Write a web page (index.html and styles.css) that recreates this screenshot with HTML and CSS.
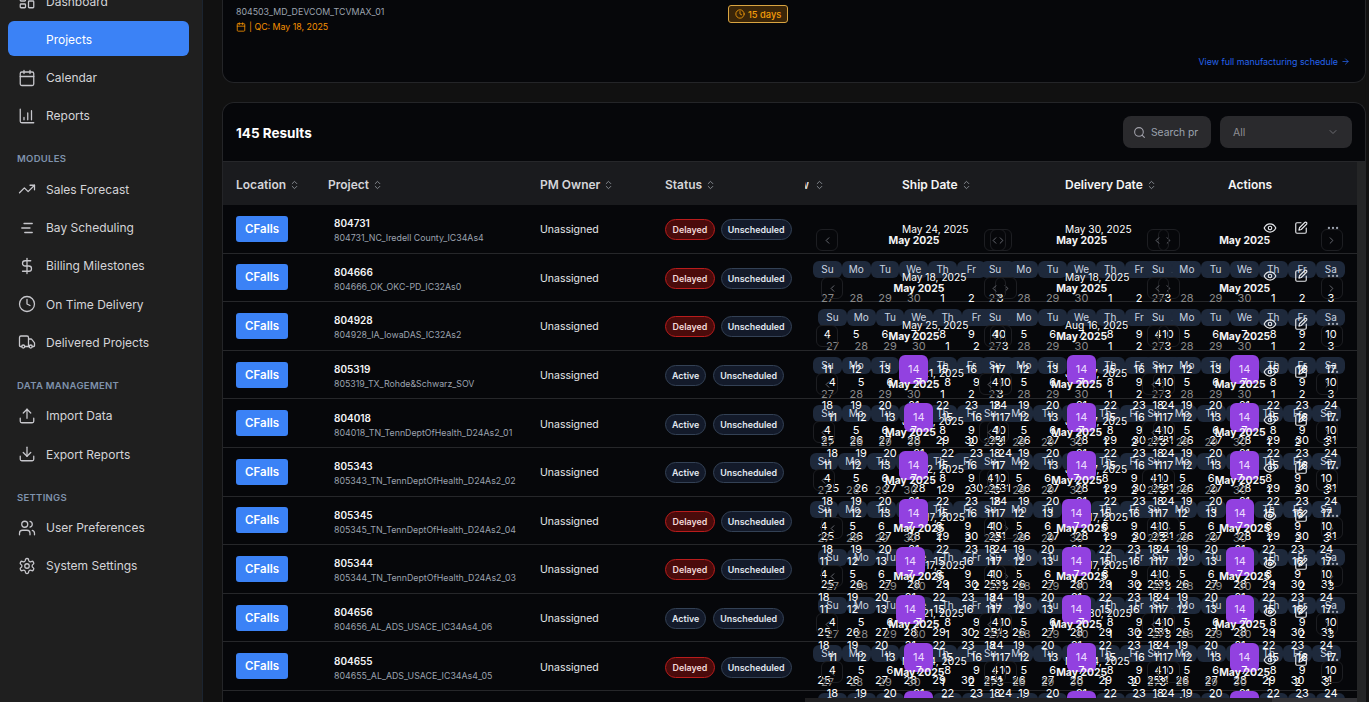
FILE: index.html
```html
<!DOCTYPE html>
<html lang="en">
<head>
<meta charset="utf-8">
<title>Projects</title>
<link rel="stylesheet" href="styles.css">
</head>
<body>
<svg class="sprite" aria-hidden="true">
  <defs>
    <symbol id="i-dash" viewBox="0 0 24 24"><rect x="3" y="3" width="7" height="9" rx="1"/><rect x="14" y="3" width="7" height="5" rx="1"/><rect x="14" y="12" width="7" height="9" rx="1"/><rect x="3" y="16" width="7" height="5" rx="1"/></symbol>
    <symbol id="i-cal" viewBox="0 0 24 24"><path d="M8 2v4M16 2v4"/><rect x="3" y="4" width="18" height="18" rx="2"/><path d="M3 10h18"/></symbol>
    <symbol id="i-chart" viewBox="0 0 24 24"><path d="M3 3v16a2 2 0 0 0 2 2h16"/><path d="M8 17v-3M13 17V8M18 17V5"/></symbol>
    <symbol id="i-trend" viewBox="0 0 24 24"><path d="M22 7l-8.500 8.500-5-5L2 17"/><path d="M16 7h6v6"/></symbol>
    <symbol id="i-list" viewBox="0 0 24 24"><path d="M8 6h11M5 12h11M9 18h10"/></symbol>
    <symbol id="i-dollar" viewBox="0 0 24 24"><path d="M12 2v20"/><path d="M17 5H9.500a3.500 3.500 0 0 0 0 7h5a3.500 3.500 0 0 1 0 7H6"/></symbol>
    <symbol id="i-clock" viewBox="0 0 24 24"><circle cx="12" cy="12" r="10"/><path d="M12 6v6l4 2"/></symbol>
    <symbol id="i-truck" viewBox="0 0 24 24"><path d="M14 18V6a2 2 0 0 0-2-2H4a2 2 0 0 0-2 2v11a1 1 0 0 0 1 1h2"/><path d="M15 18H9"/><path d="M19 18h2a1 1 0 0 0 1-1v-3.650a1 1 0 0 0-.22-.62l-3.480-4.350A1 1 0 0 0 17.520 8H14"/><circle cx="17" cy="18" r="2"/><circle cx="7" cy="18" r="2"/></symbol>
    <symbol id="i-up" viewBox="0 0 24 24"><path d="M21 15v4a2 2 0 0 1-2 2H5a2 2 0 0 1-2-2v-4"/><path d="M17 8l-5-5-5 5"/><path d="M12 3v12"/></symbol>
    <symbol id="i-down" viewBox="0 0 24 24"><path d="M21 15v4a2 2 0 0 1-2 2H5a2 2 0 0 1-2-2v-4"/><path d="M7 10l5 5 5-5"/><path d="M12 15V3"/></symbol>
    <symbol id="i-users" viewBox="0 0 24 24"><path d="M16 21v-2a4 4 0 0 0-4-4H6a4 4 0 0 0-4 4v2"/><circle cx="9" cy="7" r="4"/><path d="M22 21v-2a4 4 0 0 0-3-3.870"/><path d="M16 3.130a4 4 0 0 1 0 7.750"/></symbol>
    <symbol id="i-gear" viewBox="0 0 24 24"><path d="M12.220 2h-.44a2 2 0 0 0-2 2v.18a2 2 0 0 1-1 1.730l-.43.25a2 2 0 0 1-2 0l-.15-.08a2 2 0 0 0-2.730.73l-.22.38a2 2 0 0 0 .73 2.730l.15.1a2 2 0 0 1 1 1.720v.51a2 2 0 0 1-1 1.740l-.15.09a2 2 0 0 0-.73 2.730l.22.38a2 2 0 0 0 2.730.73l.15-.08a2 2 0 0 1 2 0l.43.25a2 2 0 0 1 1 1.730V20a2 2 0 0 0 2 2h.44a2 2 0 0 0 2-2v-.18a2 2 0 0 1 1-1.730l.43-.25a2 2 0 0 1 2 0l.15.08a2 2 0 0 0 2.730-.73l.22-.39a2 2 0 0 0-.73-2.730l-.15-.08a2 2 0 0 1-1-1.740v-.5a2 2 0 0 1 1-1.740l.15-.09a2 2 0 0 0 .73-2.730l-.22-.38a2 2 0 0 0-2.730-.73l-.15.08a2 2 0 0 1-2 0l-.43-.25a2 2 0 0 1-1-1.730V4a2 2 0 0 0-2-2z"/><circle cx="12" cy="12" r="3"/></symbol>
    <symbol id="i-sort" viewBox="0 0 24 24"><path d="M7 15l5 5 5-5"/><path d="M7 9l5-5 5 5"/></symbol>
    <symbol id="i-search" viewBox="0 0 24 24"><circle cx="11" cy="11" r="8"/><path d="M21 21l-4.300-4.300"/></symbol>
    <symbol id="i-chev" viewBox="0 0 24 24"><path d="M6 9l6 6 6-6"/></symbol>
    <symbol id="i-arrow" viewBox="0 0 24 24"><path d="M5 12h14"/><path d="M12 5l7 7-7 7"/></symbol>
    <symbol id="i-left" viewBox="0 0 24 24"><path d="M15 18l-6-6 6-6"/></symbol>
    <symbol id="i-right" viewBox="0 0 24 24"><path d="M9 18l6-6-6-6"/></symbol>
    <symbol id="i-eye" viewBox="0 0 24 24"><path d="M2 12s3.600-7 10-7 10 7 10 7-3.600 7-10 7-10-7-10-7z"/><circle cx="12" cy="12" r="3"/></symbol>
    <symbol id="i-edit" viewBox="0 0 24 24"><path d="M12 3H5a2 2 0 0 0-2 2v14a2 2 0 0 0 2 2h14a2 2 0 0 0 2-2v-7"/><path d="M18.400 2.600a2.100 2.100 0 0 1 3 3L12.400 14.600l-4 1 1-4z"/></symbol>
    <symbol id="i-more" viewBox="0 0 24 24"><circle cx="5" cy="12" r="1"/><circle cx="12" cy="12" r="1"/><circle cx="19" cy="12" r="1"/></symbol>
  </defs>
</svg>

<div class="app">
  <aside class="sidebar">
    <nav class="nav">
      <a class="nav-item"><svg class="icon"><use href="#i-dash"/></svg><span>Dashboard</span></a>
      <a class="nav-item active"><span class="icon"></span><span>Projects</span></a>
      <a class="nav-item"><svg class="icon"><use href="#i-cal"/></svg><span>Calendar</span></a>
      <a class="nav-item"><svg class="icon"><use href="#i-chart"/></svg><span>Reports</span></a>
      <div class="nav-head">MODULES</div>
      <a class="nav-item"><svg class="icon"><use href="#i-trend"/></svg><span>Sales Forecast</span></a>
      <a class="nav-item"><svg class="icon"><use href="#i-list"/></svg><span>Bay Scheduling</span></a>
      <a class="nav-item"><svg class="icon"><use href="#i-dollar"/></svg><span>Billing Milestones</span></a>
      <a class="nav-item"><svg class="icon"><use href="#i-clock"/></svg><span>On Time Delivery</span></a>
      <a class="nav-item"><svg class="icon"><use href="#i-truck"/></svg><span>Delivered Projects</span></a>
      <div class="nav-head">DATA MANAGEMENT</div>
      <a class="nav-item"><svg class="icon"><use href="#i-up"/></svg><span>Import Data</span></a>
      <a class="nav-item"><svg class="icon"><use href="#i-down"/></svg><span>Export Reports</span></a>
      <div class="nav-head">SETTINGS</div>
      <a class="nav-item"><svg class="icon"><use href="#i-users"/></svg><span>User Preferences</span></a>
      <a class="nav-item"><svg class="icon"><use href="#i-gear"/></svg><span>System Settings</span></a>
    </nav>
  </aside>

  <main class="main">
    <section class="card top-card">
      <div class="top-left">
        <div class="top-id">804503</div>
        <div class="top-name">804503_MD_DEVCOM_TCVMAX_01</div>
        <div class="top-qc"><svg class="qc-icon"><use href="#i-cal"/></svg><span>| QC: May 18, 2025</span></div>
      </div>
      <div class="days"><svg class="days-icon"><use href="#i-clock"/></svg><span>15 days</span></div>
      <a class="full-link">View full manufacturing schedule <svg class="link-icon"><use href="#i-arrow"/></svg></a>
    </section>

    <section class="card results">
      <header class="results-bar">
        <h2 class="results-title">145 Results</h2>
        <div class="results-tools">
          <div class="search"><svg class="search-icon"><use href="#i-search"/></svg><span class="search-text">Search pr</span></div>
          <div class="select"><span>All</span><svg class="select-icon"><use href="#i-chev"/></svg></div>
        </div>
      </header>

      <div class="table">
        <div class="table-left">
          <div class="thead">
            <div class="th col-loc">Location <svg class="sort"><use href="#i-sort"/></svg></div>
            <div class="th col-proj">Project <svg class="sort"><use href="#i-sort"/></svg></div>
            <div class="th col-pm">PM Owner <svg class="sort"><use href="#i-sort"/></svg></div>
            <div class="th col-status">Status <svg class="sort"><use href="#i-sort"/></svg></div>
          </div>
          <div class="tr"><div class="col-loc"><span class="loc">CFalls</span></div><div class="col-proj cell-proj"><b>804731</b><small>804731_NC_Iredell County_IC34As4</small></div><div class="col-pm cell-pm">Unassigned</div><div class="col-status pills"><span class="pill red">Delayed</span><span class="pill navy">Unscheduled</span></div></div>
          <div class="tr"><div class="col-loc"><span class="loc">CFalls</span></div><div class="col-proj cell-proj"><b>804666</b><small>804666_OK_OKC-PD_IC32As0</small></div><div class="col-pm cell-pm">Unassigned</div><div class="col-status pills"><span class="pill red">Delayed</span><span class="pill navy">Unscheduled</span></div></div>
          <div class="tr"><div class="col-loc"><span class="loc">CFalls</span></div><div class="col-proj cell-proj"><b>804928</b><small>804928_IA_IowaDAS_IC32As2</small></div><div class="col-pm cell-pm">Unassigned</div><div class="col-status pills"><span class="pill red">Delayed</span><span class="pill navy">Unscheduled</span></div></div>
          <div class="tr"><div class="col-loc"><span class="loc">CFalls</span></div><div class="col-proj cell-proj"><b>805319</b><small>805319_TX_Rohde&amp;Schwarz_SOV</small></div><div class="col-pm cell-pm">Unassigned</div><div class="col-status pills"><span class="pill navy">Active</span><span class="pill navy">Unscheduled</span></div></div>
          <div class="tr"><div class="col-loc"><span class="loc">CFalls</span></div><div class="col-proj cell-proj"><b>804018</b><small>804018_TN_TennDeptOfHealth_D24As2_01</small></div><div class="col-pm cell-pm">Unassigned</div><div class="col-status pills"><span class="pill navy">Active</span><span class="pill navy">Unscheduled</span></div></div>
          <div class="tr"><div class="col-loc"><span class="loc">CFalls</span></div><div class="col-proj cell-proj"><b>805343</b><small>805343_TN_TennDeptOfHealth_D24As2_02</small></div><div class="col-pm cell-pm">Unassigned</div><div class="col-status pills"><span class="pill navy">Active</span><span class="pill navy">Unscheduled</span></div></div>
          <div class="tr"><div class="col-loc"><span class="loc">CFalls</span></div><div class="col-proj cell-proj"><b>805345</b><small>805345_TN_TennDeptOfHealth_D24As2_04</small></div><div class="col-pm cell-pm">Unassigned</div><div class="col-status pills"><span class="pill red">Delayed</span><span class="pill navy">Unscheduled</span></div></div>
          <div class="tr"><div class="col-loc"><span class="loc">CFalls</span></div><div class="col-proj cell-proj"><b>805344</b><small>805344_TN_TennDeptOfHealth_D24As2_03</small></div><div class="col-pm cell-pm">Unassigned</div><div class="col-status pills"><span class="pill red">Delayed</span><span class="pill navy">Unscheduled</span></div></div>
          <div class="tr"><div class="col-loc"><span class="loc">CFalls</span></div><div class="col-proj cell-proj"><b>804656</b><small>804656_AL_ADS_USACE_IC34As4_06</small></div><div class="col-pm cell-pm">Unassigned</div><div class="col-status pills"><span class="pill navy">Active</span><span class="pill navy">Unscheduled</span></div></div>
          <div class="tr"><div class="col-loc"><span class="loc">CFalls</span></div><div class="col-proj cell-proj"><b>804655</b><small>804655_AL_ADS_USACE_IC34As4_05</small></div><div class="col-pm cell-pm">Unassigned</div><div class="col-status pills"><span class="pill red">Delayed</span><span class="pill navy">Unscheduled</span></div></div>
        </div>

        <div class="table-right">
          <div class="thead thead-right">
            <div class="th clip-col"><span class="clip-text">w</span><svg class="sort"><use href="#i-sort"/></svg></div>
            <div class="th col-ship">Ship Date <svg class="sort"><use href="#i-sort"/></svg></div>
            <div class="th col-deliv">Delivery Date <svg class="sort"><use href="#i-sort"/></svg></div>
            <div class="th col-act">Actions</div>
          </div>
          <div id="lines" class="lines"></div>
          <div id="overlay" class="overlay"></div>
          <div class="hscroll"><div class="hthumb"></div></div>
        </div>
        <div class="vscroll"></div>
      </div>
    </section>
  </main>
</div>
<script src="app.js"></script>
</body>
</html>
```

FILE: styles.css
```css
* { box-sizing: border-box; }
html, body { margin: 0; height: 100%; overflow: hidden; }
body { background: #111111; color: #fff; font-family: Inter, "Liberation Sans", sans-serif; font-size: 12px; }
.sprite { width: 0; height: 0; position: absolute; }
svg { fill: none; stroke: currentColor; stroke-width: 2; stroke-linecap: round; stroke-linejoin: round; }

.app { display: flex; height: 702px; overflow: hidden; }

.sidebar { width: 203px; flex: none; background: #1f1f1f; border-right: 1px solid #1b2430; overflow: hidden; }
.nav { display: flex; flex-direction: column; gap: 3px; padding: 0 13px 0 8px; margin-top: -17px; }
.nav-item { display: flex; align-items: center; gap: 10px; height: 35.200px; padding: 1.200px 0 0 10px; border-radius: 6px; color: #d4d4d8; font-size: 12px; }
.nav-item.active { background: #3b82f6; color: #fff; }
.icon { width: 18px; height: 18px; flex: none; color: #c7c7cc; stroke-width: 1.700; }
.nav-head { margin: 14.500px 0 0 9px; height: 18px; line-height: 17px; font-size: 9.500px; font-weight: 600; letter-spacing: .3px; color: #7f93ad; }

.main { flex: 1; min-width: 0; padding: 0 3px 0 19px; display: flex; flex-direction: column; gap: 19px; }
.card { background: #06070a; border: 1px solid #242528; border-radius: 12px; }

.top-card { height: 83px; flex: none; border-top: 0; border-top-left-radius: 0; border-top-right-radius: 0; display: flex; position: relative; padding: 0 13px; }
.top-left { width: 492px; margin-top: -11px; }
.top-id { height: 13px; font-size: 11px; font-weight: 700; line-height: 13px; }
.top-name { margin-top: 3px; font-size: 8.800px; line-height: 13px; color: #9ca3af; }
.top-qc { margin-top: 2px; display: flex; align-items: center; gap: 3px; font-size: 8.800px; line-height: 14px; color: #f59000; }
.qc-icon { width: 10px; height: 10px; stroke-width: 2; }
.days { height: 18px; margin-top: 5px; padding: 0 6px; display: flex; align-items: center; gap: 3px; border: 1px solid #d9a441; border-radius: 3px; background: #3a2508; color: #f59e0b; font-size: 9.300px; font-weight: 500; }
.days-icon { width: 10px; height: 10px; }
.full-link { position: absolute; right: 15px; top: 56px; color: #2563eb; font-size: 8.850px; display: flex; align-items: center; gap: 3px; }
.link-icon { width: 9px; height: 9px; }

.results { flex: 1; min-height: 0; border-bottom: 0; border-bottom-left-radius: 0; border-bottom-right-radius: 0; position: relative; overflow: hidden; }
.results-bar { height: 59px; display: flex; align-items: center; justify-content: space-between; padding: 0 13px; border-bottom: 1px solid #26272a; }
.results-title { margin: 2px 0 0; font-size: 13.500px; font-weight: 700; }
.results-tools { display: flex; gap: 9px; }
.search { width: 88px; height: 32px; border-radius: 8px; background: #2a2a2d; display: flex; align-items: center; gap: 5px; padding-left: 10px; color: #9ca3af; }
.search-icon { width: 13px; height: 13px; flex: none; color: #a1a1aa; }
.search-text { font-size: 10.300px; }
.select { width: 132px; height: 32px; border-radius: 8px; background: #2a2a2d; display: flex; align-items: center; justify-content: space-between; padding: 0 13px; color: #8e8e93; font-size: 10.500px; }
.select-icon { width: 12px; height: 12px; color: #6b6b70; }

.table { display: flex; height: 541px; overflow: hidden; position: relative; }
.table-left { width: 582px; flex: none; overflow: hidden; }
.table-right { flex: 1; min-width: 0; position: relative; overflow: hidden; background: #06070a; margin-right: 8px; }
.vscroll { position: absolute; right: 0; top: 0; bottom: 0; width: 8px; background: #242526; }
.hscroll { position: absolute; left: 0; right: 0; bottom: 0; height: 5px; background: #1f1f21; display: flex; justify-content: flex-end; z-index: 1; }
.hthumb { width: 85px; background: #323236; }

.thead { display: flex; height: 43px; padding-top: 2px; background: #1a1b1e; align-items: center; }
.th { display: flex; align-items: center; gap: 3px; font-size: 12px; font-weight: 600; color: #d4d4d8; white-space: nowrap; }
.sort { width: 11px; height: 14px; color: #8b8f96; stroke-width: 2; }
.col-loc { width: 105px; padding-left: 13px; flex: none; }
.col-proj { width: 212px; flex: none; }
.col-pm { width: 125px; flex: none; }
.col-status { flex: 1; min-width: 0; white-space: nowrap; }

.tr { display: flex; align-items: center; height: 48.600px; border-bottom: 1px solid #26272a; font-size: 10.500px; color: #e5e7eb; }
.loc { display: inline-flex; align-items: center; justify-content: center; width: 52px; height: 26px; border-radius: 3px; background: #3b82f6; color: #fff; font-size: 11.500px; font-weight: 600; }
.cell-proj { padding: 3px 0 0 6px; display: flex; flex-direction: column; gap: 3px; }
.cell-proj b { font-size: 10px; font-weight: 600; color: #f3f4f6; }
.cell-proj small { font-size: 8.800px; color: #9ca3af; white-space: nowrap; }
.cell-pm { padding-top: 2px; }
.pills { display: flex; gap: 6px; padding-top: 2px; }
.pill { height: 21px; padding: 0 6px; border-radius: 11px; display: inline-flex; align-items: center; font-size: 8.900px; font-weight: 600; border: 1px solid; }
.pill.red { padding: 0 6.500px; background: #4a0b0b; border-color: #b91c1c; color: #f3d9d9; }
.pill.navy { background: #131a2a; border-color: #334155; color: #e2e8f0; }
.pill.navy + .pill.navy { margin-left: 1px; }

.thead-right { position: relative; }
.clip-col { width: 22px; flex: none; justify-content: flex-start; gap: 3px; }
.clip-text { width: 4px; flex: none; overflow: hidden; display: flex; justify-content: flex-end; margin-right: 2px; }
.col-ship { margin-left: 75px; width: 163px; flex: none; color: #f4f4f5; }
.col-deliv { width: 163px; flex: none; color: #f4f4f5; }
.col-act { color: #f4f4f5; }

.lines-row { height: 48.600px; border-bottom: 1px solid #26272a; }
.overlay { position: absolute; left: 0; right: 0; top: 43px; bottom: 0; overflow: hidden; z-index: 0; }
.o-row { height: 48px; position: relative; }
.date { position: absolute; top: 17px; font-size: 10.200px; line-height: 14px; color: #fff; white-space: nowrap; z-index: 1; }
.date-ship { left: 97px; }
.date-deliv { left: 260px; }
.act { position: absolute; top: 16px; width: 14px; height: 14px; z-index: 1; color: #e5e7eb; }
.act-eye { left: 458px; }
.act-edit { left: 489px; }
.act-more { left: 521px; color: #9ca3af; }

.cal { position: absolute; top: 24px; width: 202px; }
.cal-head { display: flex; align-items: center; justify-content: space-between; height: 22px; margin: 0 3px; }
.cal-title { position: relative; z-index: 2; font-size: 10.400px; font-weight: 700; color: #f4f4f5; white-space: nowrap; }
.cal-nav { position: relative; z-index: 2; width: 22px; height: 22px; border: 1px solid #1d1e22; border-radius: 6px; display: flex; align-items: center; justify-content: center; color: #6e7178; }
.cal-nav svg { width: 11px; height: 11px; }
.cal-grid { display: grid; grid-template-columns: repeat(7, 28.800px); row-gap: 6.400px; margin-top: 10px; }
.wd { position: relative; z-index: 1; height: 17px; line-height: 17px; text-align: center; border-radius: 6px; background: #1e293b; color: #cbd5e1; font-size: 10px; }
.day { position: relative; z-index: 2; height: 29px; line-height: 29px; text-align: center; font-size: 11px; color: #fff; }
.day.out { color: #8a8a8a; }
.day.sel { background: #9241e0; border-radius: 6px; color: #ecdcff; }
```

FILE: app.js
```js
var ship = ['May 24, 2025','May 18, 2025','May 25, 2025','Jun 21, 2025','Jun 15, 2025','Jun 12, 2025','May 17, 2025','May 17, 2025','Jun 21, 2025','May 14, 2025'];
var deliv = ['May 30, 2025','May 18, 2025','Aug 16, 2025','Jun 27, 2025','Jun 27, 2025','Jun 27, 2025','May 17, 2025','May 17, 2025','May 30, 2025','May 14, 2025'];
var shiftA = [0, 5, 0, 0, -3.5, -3.5, 5, 5, 0, 5];
var shiftB = [0, 0, 0, -5, -5, -5, 0, 0, -5, 0];
var shiftC = [0, 0, 0, -4.500, -4.500, -4.500, 0, 0, -4.500, 0];
var baseLeft = [8, 175.700, 338.700];
var weekdays = ['Su','Mo','Tu','We','Th','Fr','Sa'];

function icon(id) {
  return '<svg><use href="#' + id + '"/></svg>';
}

function calendar(left) {
  var html = '<div class="cal" style="left:' + left + 'px">';
  html += '<div class="cal-head"><span class="cal-nav">' + icon('i-left') + '</span>';
  html += '<span class="cal-title">May 2025</span>';
  html += '<span class="cal-nav">' + icon('i-right') + '</span></div>';
  html += '<div class="cal-grid">';
  weekdays.forEach(function (d) { html += '<div class="wd">' + d + '</div>'; });
  [27, 28, 29, 30].forEach(function (d) { html += '<div class="day out">' + d + '</div>'; });
  for (var d = 1; d <= 31; d++) {
    html += '<div class="day' + (d === 14 ? ' sel' : '') + '">' + d + '</div>';
  }
  return html + '</div></div>';
}

var overlay = document.getElementById('overlay');
var lines = document.getElementById('lines');
var out = '';
for (var i = 0; i < 10; i++) {
  out += '<div class="o-row">';
  out += '<span class="date date-ship">' + ship[i] + '</span>';
  out += calendar(baseLeft[0] + shiftA[i]);
  out += '<span class="date date-deliv">' + deliv[i] + '</span>';
  out += calendar(baseLeft[1] + shiftB[i]);
  out += '<svg class="act act-eye"><use href="#i-eye"/></svg>';
  out += '<svg class="act act-edit"><use href="#i-edit"/></svg>';
  out += '<svg class="act act-more"><use href="#i-more"/></svg>';
  out += calendar(baseLeft[2] + shiftC[i]);
  out += '</div>';
}
overlay.innerHTML = out;
var rows = '';
for (var j = 0; j < 11; j++) { rows += '<div class="lines-row"></div>'; }
lines.innerHTML = rows;
```
